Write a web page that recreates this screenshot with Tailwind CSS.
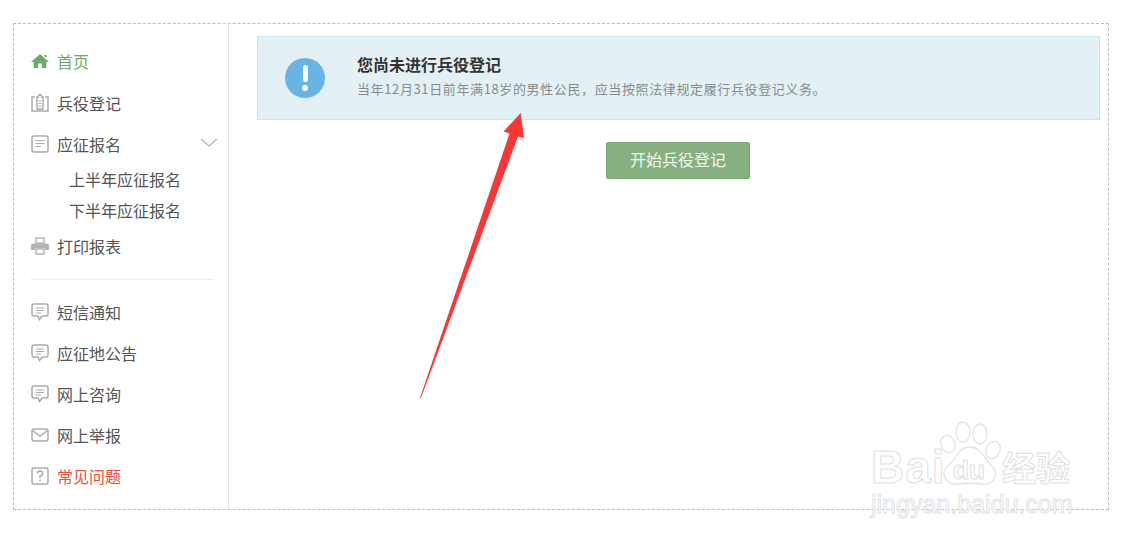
<!DOCTYPE html>
<html lang="zh">
<head>
<meta charset="utf-8">
<script src="https://cdn.jsdelivr.net/npm/@tailwindcss/browser@4"></script>
</head>
<body class="bg-white">
<div class="relative w-[1135px] h-[542px] overflow-hidden bg-white font-['Noto_Sans_CJK_SC','Noto_Sans',sans-serif] pt-[23px] pl-[13px]">
  <div class="w-[1096px] h-[487px] border border-dashed border-[#bdbdbd] flex">
    <aside class="w-[215px] h-full shrink-0 border-r border-[#e3e3e3] pl-[17px] pt-[17px] text-[16px] text-[#555]">
      <div class="h-[41px] flex items-center gap-2 text-[#6fa968]">
        <svg class="w-[18px] h-[18px] -mt-[2px]" viewBox="0 0 18 18"><path d="M9 2 L18 10 H15.4 V16 H10.8 V11.5 H7.2 V16 H2.6 V10 H0 Z M13 3 H15.4 V6 L13 4 Z" fill="#6fa968"/></svg>
        <span class="-mt-[1px]">首页</span>
      </div>
      <div class="h-[41px] flex items-center gap-2">
        <svg class="w-[18px] h-[18px]" viewBox="0 0 18 18" fill="none" stroke="#aaa"><path d="M4 3 H1 V17 H17 V3 H14" stroke-width="1.5"/><path d="M6 3 H7.5 V1 H10.5 V3 H12 V15 H6 Z" stroke-width="1.4"/><path d="M7.5 7 H10.5 M7.5 9.5 H10.5 M7.5 12 H10.5" stroke-width="1"/></svg>
        <span>兵役登记</span>
      </div>
      <div class="h-[41px] flex items-center gap-2 relative">
        <svg class="w-[18px] h-[18px]" viewBox="0 0 18 18" fill="none" stroke="#aaa"><rect x="1" y="1" width="16" height="16" rx="2" stroke-width="1.5"/><path d="M4.5 5.5 H13.5 M4.5 8.5 H13.5 M4.5 11.5 H10" stroke-width="1.2"/></svg>
        <span>应征报名</span>
        <svg class="absolute left-[169px] top-[15px] w-[18px] h-[10px]" viewBox="0 0 18 10" fill="none" stroke="#b5b5b5" stroke-width="1.3"><path d="M1 1 L9 8 L17 1"/></svg>
      </div>
      <div class="pl-[38px] -mt-[1px]">
        <div class="h-[31px] flex items-center">上半年应征报名</div>
        <div class="h-[31px] flex items-center">下半年应征报名</div>
      </div>
      <div class="h-[41px] flex items-center gap-2">
        <svg class="w-[18px] h-[18px]" viewBox="0 0 18 18"><path d="M5 1 H13 V6 H5 Z" fill="none" stroke="#b3b3b3" stroke-width="1.4"/><path d="M2 6.5 H16 A2 2 0 0 1 18 8.5 V13 H14 V11 H4 V13 H0 V8.5 A2 2 0 0 1 2 6.5 Z" fill="#b3b3b3"/><path d="M5 12 H13 V17 H5 Z" fill="none" stroke="#b3b3b3" stroke-width="1.4"/></svg>
        <span>打印报表</span>
      </div>
      <div class="w-[182px] border-t border-dotted border-[#e2e2e2] mt-[13px] mb-[11px]"></div>
      <div class="h-[41px] flex items-center gap-2">
        <svg class="w-[18px] h-[18px]" viewBox="0 0 18 18" fill="none" stroke="#aaa"><path d="M3 1 H15 A2 2 0 0 1 17 3 V11 A2 2 0 0 1 15 13 H11 L8.5 16.5 L7 13 H3 A2 2 0 0 1 1 11 V3 A2 2 0 0 1 3 1 Z" stroke-width="1.5"/><path d="M5 5 H13 M5 7.5 H13 M5 10 H10" stroke-width="1"/></svg>
        <span>短信通知</span>
      </div>
      <div class="h-[41px] flex items-center gap-2">
        <svg class="w-[18px] h-[18px]" viewBox="0 0 18 18" fill="none" stroke="#aaa"><path d="M3 1 H15 A2 2 0 0 1 17 3 V11 A2 2 0 0 1 15 13 H11 L8.5 16.5 L7 13 H3 A2 2 0 0 1 1 11 V3 A2 2 0 0 1 3 1 Z" stroke-width="1.5"/><path d="M5 5 H13 M5 7.5 H13 M5 10 H10" stroke-width="1"/></svg>
        <span>应征地公告</span>
      </div>
      <div class="h-[41px] flex items-center gap-2">
        <svg class="w-[18px] h-[18px]" viewBox="0 0 18 18" fill="none" stroke="#aaa"><path d="M3 1 H15 A2 2 0 0 1 17 3 V11 A2 2 0 0 1 15 13 H11 L8.5 16.5 L7 13 H3 A2 2 0 0 1 1 11 V3 A2 2 0 0 1 3 1 Z" stroke-width="1.5"/><path d="M5 5 H13 M5 7.5 H13 M5 10 H10" stroke-width="1"/></svg>
        <span>网上咨询</span>
      </div>
      <div class="h-[41px] flex items-center gap-2">
        <svg class="w-[18px] h-[18px]" viewBox="0 0 18 18" fill="none" stroke="#aaa" stroke-width="1.5"><rect x="1" y="3" width="16" height="12" rx="2"/><path d="M1.5 4.5 L9 10 L16.5 4.5"/></svg>
        <span>网上举报</span>
      </div>
      <div class="h-[41px] flex items-center gap-2 text-[#f0503c]">
        <svg class="w-[18px] h-[18px]" viewBox="0 0 18 18" fill="none" stroke="#aaa" stroke-width="1.5"><rect x="1" y="1" width="16" height="16" rx="2"/><path d="M6.5 6.5 A2.5 2.5 0 1 1 9 9 V11" /><path d="M9 12.5 V14.5"/></svg>
        <span>常见问题</span>
      </div>
    </aside>
    <main class="flex-1 pt-3 pl-7 pr-2">
      <div class="h-[84px] w-[843px] bg-[#e3f1f7] border border-[#c5e6ef] flex items-center pl-[27px]">
        <div class="w-10 h-10 rounded-full bg-[#68b5e3] flex flex-col items-center justify-center gap-[3px] shrink-0">
          <div class="w-[5px] h-[17px] rounded-full bg-white"></div>
          <div class="w-[6px] h-[6px] rounded-full bg-white"></div>
        </div>
        <div class="ml-[32px] pb-[3px]">
          <div class="text-[16px] leading-[24px] font-bold text-[#333]">您尚未进行兵役登记</div>
          <div class="text-[13px] leading-[24px] mt-[1px] tracking-[0.62px] text-[#8a8a8a]">当年12月31日前年满18岁的男性公民，应当按照法律规定履行兵役登记义务。</div>
        </div>
      </div>
      <div class="flex w-[843px] mt-[22px] pl-[349px]">
        <button class="w-[144px] h-[37px] pb-[3px] bg-[#86b07f] border border-[#7faa78] rounded-[2px] text-[16px] text-[#f4f7f2]">开始兵役登记</button>
      </div>
    </main>
  </div>

  <svg class="absolute left-0 top-0 w-[1135px] h-[542px] pointer-events-none" viewBox="0 0 1135 542">
    <polygon points="520.7,113 503.5,131.5 509.5,133.5 420,398 421,398 518,136.5 524,138" fill="#fe3535"/>
    <g fill="white" stroke="#e2e2e2" stroke-width="1.3">
      <ellipse cx="948" cy="444" rx="7" ry="9" transform="rotate(-20 948 444)"/>
      <ellipse cx="963" cy="432" rx="7" ry="10"/>
      <ellipse cx="980" cy="434" rx="7" ry="10"/>
      <ellipse cx="993" cy="450" rx="7" ry="9" transform="rotate(25 993 450)"/>
      <path d="M970 447 C958 447 956 460 948 466 C940 472 944 485 958 484 C966 483 974 483 982 484 C996 485 998 472 992 466 C984 460 982 447 970 447 Z"/>
    </g>
  </svg>
  <div class="absolute left-[871px] top-[441px] text-[46px] leading-[52px] font-bold tracking-[1px] text-white [-webkit-text-stroke:1px_#e0e0e0] font-['Liberation_Sans',sans-serif]">Bai</div>
  <div class="absolute left-[953px] top-[455px] text-[26px] leading-[30px] font-bold text-white [-webkit-text-stroke:1px_#dedede] font-['Liberation_Sans',sans-serif]">du</div>
  <div class="absolute left-[1002px] top-[445px] text-[34px] leading-[44px] font-bold text-white [-webkit-text-stroke:1px_#e0e0e0]">经验</div>
  <div class="absolute left-[871px] top-[489px] text-[25px] leading-[30px] text-white/80 [-webkit-text-stroke:1px_#e2e2e2] font-['Liberation_Sans',sans-serif]">jingyan.baidu.com</div>
</div>
</body>
</html>
